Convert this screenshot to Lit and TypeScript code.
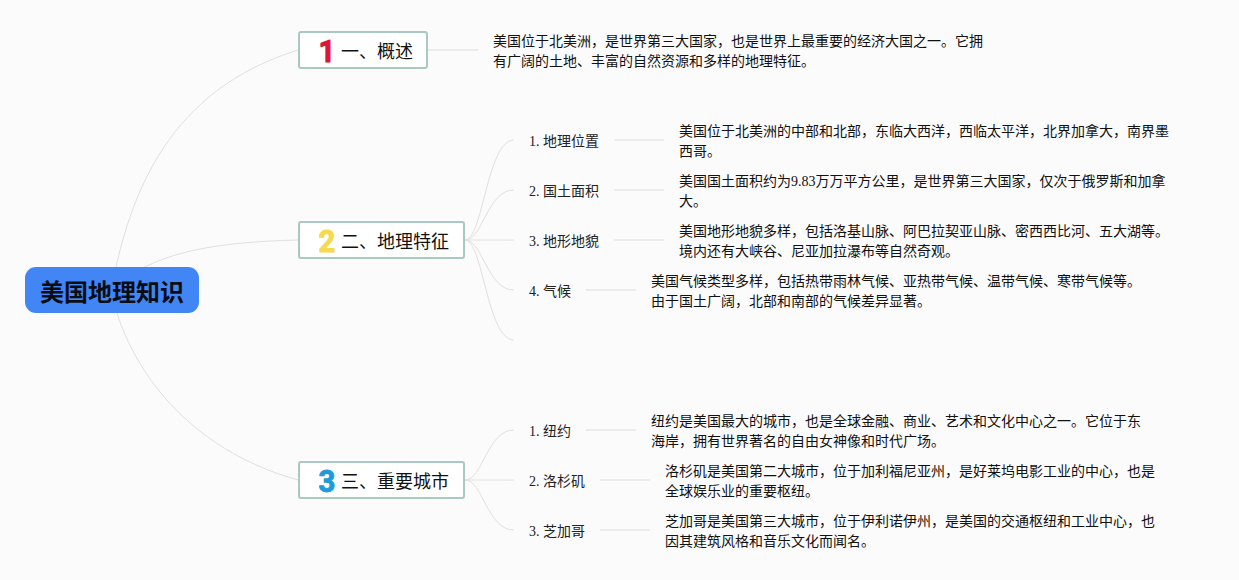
import { LitElement, html, css, svg } from "lit";
import { customElement } from "lit/decorators.js";

interface Leaf { x: number; y: number; label: string; lines: string[]; descX: number; lineFrom: number; lineTo: number }

const leaves: Leaf[] = [
  { x: 529, y: 141, label: "1. 地理位置", descX: 679, lineFrom: 614, lineTo: 664, lines: ["美国位于北美洲的中部和北部，东临大西洋，西临太平洋，北界加拿大，南界墨", "西哥。"] },
  { x: 529, y: 191, label: "2. 国土面积", descX: 679, lineFrom: 614, lineTo: 664, lines: ["美国国土面积约为9.83万万平方公里，是世界第三大国家，仅次于俄罗斯和加拿", "大。"] },
  { x: 529, y: 241, label: "3. 地形地貌", descX: 679, lineFrom: 614, lineTo: 664, lines: ["美国地形地貌多样，包括洛基山脉、阿巴拉契亚山脉、密西西比河、五大湖等。", "境内还有大峡谷、尼亚加拉瀑布等自然奇观。"] },
  { x: 529, y: 291, label: "4. 气候", descX: 651, lineFrom: 586, lineTo: 636, lines: ["美国气候类型多样，包括热带雨林气候、亚热带气候、温带气候、寒带气候等。", "由于国土广阔，北部和南部的气候差异显著。"] },
  { x: 529, y: 431, label: "1. 纽约", descX: 651, lineFrom: 586, lineTo: 636, lines: ["纽约是美国最大的城市，也是全球金融、商业、艺术和文化中心之一。它位于东", "海岸，拥有世界著名的自由女神像和时代广场。"] },
  { x: 529, y: 481, label: "2. 洛杉矶", descX: 665, lineFrom: 600, lineTo: 650, lines: ["洛杉矶是美国第二大城市，位于加利福尼亚州，是好莱坞电影工业的中心，也是", "全球娱乐业的重要枢纽。"] },
  { x: 529, y: 531, label: "3. 芝加哥", descX: 665, lineFrom: 600, lineTo: 650, lines: ["芝加哥是美国第三大城市，位于伊利诺伊州，是美国的交通枢纽和工业中心，也", "因其建筑风格和音乐文化而闻名。"] },
];

const branches = [
  { y: 50, w: 130, num: "1", cls: "n1", label: "一、概述" },
  { y: 240, w: 167, num: "2", cls: "n2", label: "二、地理特征" },
  { y: 480, w: 167, num: "3", cls: "n3", label: "三、重要城市" },
];

const fork = (sx: number, sy: number, ex: number, ey: number) =>
  `M${sx} ${sy} C${sx + 18} ${sy} ${sx + 22} ${ey} ${ex} ${ey}`;

@customElement("app-root")
export class AppRoot extends LitElement {
  static styles = css`
    :host {
      display: block;
      position: relative;
      width: 1239px;
      height: 580px;
      overflow: hidden;
      background: #fbfbfb;
      color: #111;
      font-family: "Liberation Serif", "Noto Sans CJK SC", serif;
    }
    .wires { position: absolute; inset: 0; }
    .curve { fill: none; stroke: #e0e0de; stroke-width: 1; }
    .bar { fill: none; stroke: #ececea; stroke-width: 2; }
    .root {
      position: absolute; left: 25px; top: 267px; width: 174px; height: 46px;
      display: flex; align-items: center; justify-content: center;
      background: #4285f4; border-radius: 11px;
      font-size: 24px; font-weight: 700; color: #0b0d14;
    }
    .branch {
      position: absolute; left: 298px; height: 38px; box-sizing: border-box;
      display: flex; align-items: center; gap: 2px;
      padding-left: 15px;
      background: #fff; border: 2px solid #a9c9c2; border-radius: 3px;
      font-size: 18px; white-space: nowrap;
    }
    .num { display: block; flex: none; overflow: visible; }
    .num text {
      font-family: Roboto, sans-serif; font-weight: 700; font-size: 32px;
      text-anchor: middle; stroke-width: 1px; stroke-linejoin: round; stroke-linecap: round;
      transform-box: fill-box; transform-origin: center; transform: scaleX(0.92);
    }
    .n1 { fill: #dc1534; stroke: #dc1534; }
    .n2 { fill: #f5d94e; stroke: #f5d94e; }
    .n3 { fill: #1f9bdc; stroke: #1f9bdc; }
    .leaf {
      position: absolute; font-size: 14px; line-height: 20px; white-space: nowrap; color: #222;
    }
    .desc {
      position: absolute; font-size: 14px; line-height: 20px; white-space: nowrap; color: #111;
    }
  `;

  render() {
    return html`
      <svg class="wires" width="1239" height="580" viewBox="0 0 1239 580">
        ${svg`
          <path class="curve" d="M111 291 C130 190 170 90 298 50" />
          <path class="curve" d="M111 291 C150 252 215 242 298 240" />
          <path class="curve" d="M111 291 C128 370 190 450 298 480" />
          <path class="bar" d="M428 50 H478" />
          ${[141, 191, 241, 291, 341].map(y => svg`<path class="curve" d=${fork(465, 240, 514, y - 1)} />`)}
          ${[431, 481, 531].map(y => svg`<path class="curve" d=${fork(465, 480, 514, y - 1)} />`)}
          ${leaves.map(l => svg`<path class="bar" d="M${l.lineFrom} ${l.y - 1} H${l.lineTo}" />`)}
        `}
      </svg>
      <div class="root">美国地理知识</div>
      ${branches.map(b => html`
        <div class="branch" style="top:${b.y - 19}px;width:${b.w}px">
          <svg class="num" width="24" height="34" viewBox="0 0 24 34"><text class=${b.cls} x="12" y="28.5">${b.num}</text></svg>
          <span>${b.label}</span>
        </div>`)}
      <div class="desc" style="left:493px;top:32px">美国位于北美洲，是世界第三大国家，也是世界上最重要的经济大国之一。它拥<br />有广阔的土地、丰富的自然资源和多样的地理特征。</div>
      ${leaves.map(l => html`
        <div class="leaf" style="left:${l.x}px;top:${l.y - 9}px">${l.label}</div>
        <div class="desc" style="left:${l.descX}px;top:${l.y - 19}px">${l.lines[0]}<br />${l.lines[1]}</div>`)}
    `;
  }
}
